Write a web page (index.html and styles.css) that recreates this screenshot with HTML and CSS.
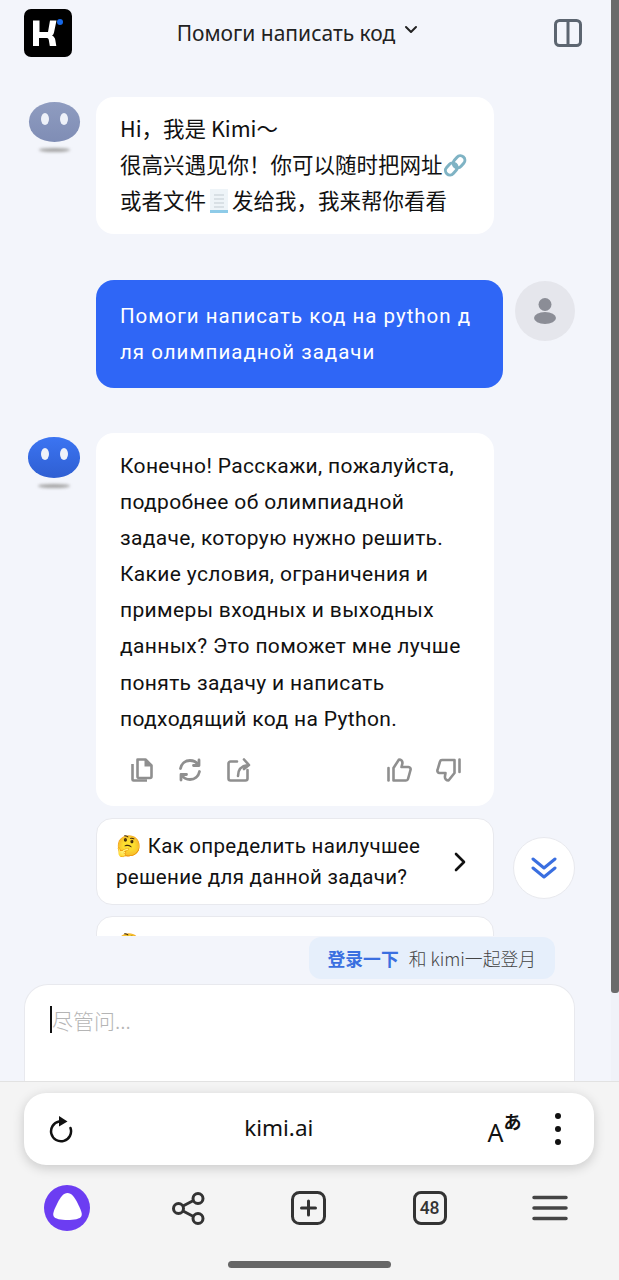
FILE: index.html
```html
<!DOCTYPE html>
<html lang="en">
<head>
  <meta charset="UTF-8" />
  <title>Kimi</title>
  <link rel="stylesheet" href="styles.css">
</head>
<body>
  <div class="page">
    <div class="web">
      <div class="top-bar">
        <svg class="logo" width="48" height="48" viewBox="0 0 48 48">
          <rect width="48" height="48" rx="7" fill="#000"/>
          <path d="M9 11.500h6.500V23H24l2-11.500h6.500l-2.500 12c-.4 1.500-1 2.500-2 3 2 1 3 2.500 3.300 4.500l1 6h-6.500l-1-6c-.3-1.500-1-2-2.500-2h-7.300v8H9z" fill="#fff"/>
          <circle cx="36" cy="13" r="3" fill="#1668e8"/>
        </svg>
        <div class="top-title">
          Помоги написать код
          <svg width="14" height="10" viewBox="0 0 14 10"><path d="M2 2l5 5 5-5" fill="none" stroke="#222" stroke-width="2" stroke-linecap="round" stroke-linejoin="round"/></svg>
        </div>
        <svg class="panel-icon" width="28" height="28" viewBox="0 0 28 28"><rect x="1.500" y="1.500" width="25" height="25" rx="4" fill="none" stroke="#5c6570" stroke-width="3"/><path d="M14 2v24" stroke="#5c6570" stroke-width="3"/></svg>
      </div>

      <div class="chat-messages">
        <div class="row row-first">
          <div class="bot-avatar pale"><i></i><i></i></div>
          <div class="message received first">
            Hi，我是 Kimi～<br>
            很高兴遇见你！你可以随时把网址<svg class="emoji" width="25" height="25" viewBox="0 0 25 25"><g fill="none" stroke="#7fb3c4" stroke-width="3"><rect x="12" y="2" width="9" height="13" rx="4.500" transform="rotate(42 16 8)"/><rect x="4" y="10" width="9" height="13" rx="4.500" transform="rotate(42 9 16)"/></g></svg><br>
            或者文件<svg class="emoji" width="26" height="26" viewBox="0 0 26 26"><rect x="4" y="1" width="18" height="24" fill="#eef4f8"/><path d="M4 22h18v3H4z" fill="#8ecbe8"/><path d="M8 7h10M8 11h10M8 15h10M8 19h10" stroke="#c3ccd2"/></svg>发给我，我来帮你看看
          </div>
        </div>

        <div class="row row-user">
          <div class="message sent">Помоги написать код на python д<br>ля олимпиадной задачи</div>
          <div class="user-avatar">
            <svg width="22" height="26" viewBox="0 0 22 26"><circle cx="11" cy="6.500" r="6.500" fill="#8b8d96"/><ellipse cx="11" cy="20" rx="11" ry="6" fill="#8b8d96"/></svg>
          </div>
        </div>

        <div class="row row-answer">
          <div class="bot-avatar"><i></i><i></i></div>
          <div class="message received answer">
            <div class="answer-text">Конечно! Расскажи, пожалуйста, подробнее об олимпиадной задаче, которую нужно решить. Какие условия, ограничения и примеры входных и выходных данных? Это поможет мне лучше понять задачу и написать подходящий код на Python.</div>
            <div class="actions">
              <div class="actions-group">
                <svg width="22" height="24" viewBox="0 0 22 24"><g fill="none" stroke="#8f8f8f" stroke-width="2.600" stroke-linejoin="round"><path d="M6.500 1.500h8l6 6v11a1.500 1.500 0 0 1-1.500 1.500H8a1.500 1.500 0 0 1-1.500-1.500z"/><path d="M1.500 6v15.500a1 1 0 0 0 1 1H16"/></g><path d="M13.500 1.500l7 7h-7z" fill="#8f8f8f"/></svg>
                <svg width="24" height="24" viewBox="0 0 24 24"><g fill="none" stroke="#8f8f8f" stroke-width="2.800" stroke-linecap="round" stroke-linejoin="round"><path d="M2.500 10.500C3.500 5.500 7.500 2.500 12 2.500c3.500 0 6.500 1.500 8.500 4.500"/><path d="M21.500 13.500c-1 5-5 8-9.500 8-3.500 0-6.500-1.500-8.500-4.500"/><path d="M21 2v5.500h-5.500M3 22v-5.500h5.500"/></g></svg>
                <svg width="24" height="24" viewBox="0 0 24 24"><g fill="none" stroke="#8f8f8f" stroke-width="2.600" stroke-linecap="round" stroke-linejoin="round"><path d="M10 3.500H3.500a2 2 0 0 0-2 2v15a2 2 0 0 0 2 2h15a2 2 0 0 0 2-2V12"/><path d="M11 18c0-7 3-10 10-11M17 1.500l5 5.500-5 4"/></g></svg>
              </div>
              <div class="actions-group thumbs">
                <svg width="25" height="24" viewBox="0 0 25 24"><g fill="none" stroke="#8f8f8f" stroke-width="2.600" stroke-linecap="round" stroke-linejoin="round"><path d="M1.500 10v12.500"/><path d="M6.500 10L12 1.500c2 0 3.500 1.500 3.500 3.500l-1 4h7c1.500 0 2.500 1.500 2 3l-2.500 9c-.3 1-1 1.500-2 1.500H6.500z"/></g></svg>
                <svg width="25" height="24" viewBox="0 0 25 24"><g fill="none" stroke="#8f8f8f" stroke-width="2.600" stroke-linecap="round" stroke-linejoin="round"><path d="M23.500 1.500V14"/><path d="M18.500 2H6c-1 0-1.700.5-2 1.500L1.500 12c-.5 1.500.5 3 2 3h6l-.5 3c-.5 3 1.500 4.500 3.500 4.500l6-7.500z"/></g></svg>
              </div>
            </div>
          </div>
        </div>

        <div class="suggest">
          <div class="suggest-text">🤔 Как определить наилучшее решение для данной задачи?</div>
          <svg width="14" height="20" viewBox="0 0 14 20"><path d="M3 2l8 8-8 8" fill="none" stroke="#111" stroke-width="2.600" stroke-linecap="round" stroke-linejoin="round"/></svg>
        </div>
        <div class="suggest suggest-cut">🤔</div>

        <div class="scroll-down">
          <svg width="26" height="24" viewBox="0 0 26 24"><path d="M2 3l11 9 11-9M2 12l11 9 11-9" fill="none" stroke="#3a6fe0" stroke-width="3" stroke-linecap="round" stroke-linejoin="round"/></svg>
        </div>
      </div>

      <div class="composer">
        <div class="login-row">
          <div class="login-tip"><b>登录一下</b><span>和 kimi一起登月</span></div>
        </div>
        <div class="input-box"><span class="caret"></span>尽管问...</div>
      </div>

      <div class="scroll-track"><div class="scroll-thumb"></div></div>
    </div>

    <div class="browser">
      <div class="url-bar">
        <svg width="28" height="27" viewBox="0 0 28 27"><path d="M11 5.500A10 10 0 1 0 22.500 12" fill="none" stroke="#111" stroke-width="2.500" stroke-linecap="round"/><path d="M11 0l8.500 5.500L11 10.500z" fill="#111"/></svg>
        <div class="url-text">kimi.ai</div>
        <div class="translate"><span class="tr-a">A</span><span class="tr-jp">あ</span></div>
        <div class="dots"><i></i><i></i><i></i></div>
      </div>
      <div class="tabs">
        <svg width="46" height="46" viewBox="0 0 46 46"><circle cx="23" cy="23" r="23" fill="#6c3df2"/><path d="M23.500 8c4 0 7 4 10 10 3 6 5 10 4 13-1 3-8 4-14 4S10.500 34 9.500 31s1-7 4-13 6-10 10-10z" fill="#fff"/></svg>
        <svg width="33" height="33" viewBox="0 0 33 33"><g fill="none" stroke="#333" stroke-width="3"><circle cx="26" cy="6.500" r="5"/><circle cx="6.500" cy="16.500" r="5"/><circle cx="26" cy="26.500" r="5"/><path d="M11 14l10.500-5.500M11 19l10.500 5.500"/></g></svg>
        <svg width="35" height="34" viewBox="0 0 35 34"><rect x="1.500" y="1.500" width="32" height="31" rx="7" fill="none" stroke="#333" stroke-width="3"/><path d="M17.500 10v14M10.500 17h14" stroke="#333" stroke-width="3" stroke-linecap="round"/></svg>
        <div class="tab-count">48</div>
        <svg width="36" height="26" viewBox="0 0 36 26"><path d="M2 2.500h32M2 13h32M2 23.500h32" stroke="#444" stroke-width="3.500" stroke-linecap="round"/></svg>
      </div>
      <div class="home-row"><div class="home-bar"></div></div>
    </div>
  </div>
</body>
</html>
```

FILE: styles.css
```css
* {
  box-sizing: border-box;
}

html, body {
  margin: 0;
  height: 1280px;
  overflow: hidden;
}

body {
  font-family: Roboto, "Noto Sans CJK SC", sans-serif;
  background: #f3f5fb;
  color: #111;
}

.page {
  display: flex;
  flex-direction: column;
  width: 619px;
  height: 1280px;
}

.web {
  position: relative;
  height: 1081px;
  padding-right: 8px;
  overflow: hidden;
}

.top-bar {
  display: flex;
  align-items: center;
  height: 68px;
  padding: 0 29px 2px 24px;
}

.logo {
  flex: none;
}

.top-title {
  flex: 1;
  display: flex;
  justify-content: center;
  align-items: center;
  gap: 9px;
  padding-right: 31px;
  font-family: "Noto Sans", sans-serif;
  font-size: 21px;
  color: #222;
}

.top-title svg {
  margin-top: -6px;
}

.chat-messages {
  padding: 0 36px 0 28px;
}

.row {
  display: flex;
  align-items: flex-start;
}

.row-first {
  margin-top: 29px;
}

.row-user {
  margin-top: 46px;
}

.row-answer {
  margin-top: 45px;
}

.bot-avatar {
  position: relative;
  flex: none;
  display: flex;
  justify-content: center;
  gap: 11px;
  width: 52px;
  height: 41px;
  margin: 4px 16px 0 0;
  padding-top: 11px;
  border-radius: 50% / 48%;
  background: linear-gradient(#3b74f2, #2f5fd2);
}

.bot-avatar.pale {
  background: linear-gradient(#8f9cc0, #7f8db5);
  width: 51px;
  height: 40px;
  margin: 5px 16px 0 1px;
}

.bot-avatar i {
  width: 8px;
  height: 12px;
  border-radius: 50%;
  background: #eef1f9;
}

.bot-avatar::after {
  content: "";
  position: absolute;
  left: 10px;
  right: 10px;
  bottom: -10px;
  height: 4px;
  border-radius: 50%;
  background: #a5a5a5;
  filter: blur(1.500px);
}

.message {
  border-radius: 18px;
  font-size: 20px;
  padding: 0 24px;
}

.received {
  width: 398px;
  background: #fff;
}

.first {
  height: 137px;
  padding-top: 13px;
  line-height: 36px;
  font-family: "Noto Sans CJK SC", sans-serif;
  font-size: 21.500px;
  font-weight: 400;
  color: #111;
}

.emoji {
  vertical-align: -5px;
}

.sent {
  width: 407px;
  height: 108px;
  margin: 0 12px 0 68px;
  padding-top: 18px;
  line-height: 36px;
  font-size: 20.500px;
  background: #2f66f6;
  color: #fff;
  letter-spacing: 1px;
}

.user-avatar {
  flex: none;
  display: flex;
  align-items: center;
  justify-content: center;
  width: 60px;
  height: 60px;
  margin-top: 1px;
  border-radius: 50%;
  background: #e5e6ec;
}

.answer {
  height: 373px;
  padding-top: 15px;
  font-size: 21px;
  line-height: 36.100px;
  letter-spacing: 0.350px;
}

.actions {
  display: flex;
  justify-content: space-between;
  margin-top: 21px;
  padding: 0 9px 0 11px;
}

.actions-group {
  display: flex;
  align-items: center;
  gap: 25px;
}

.thumbs {
  gap: 24px;
}

.suggest {
  display: flex;
  align-items: center;
  justify-content: space-between;
  width: 398px;
  height: 87px;
  margin: 12px 0 0 68px;
  padding: 0 26px 0 19px;
  background: #fff;
  border: 1px solid #e8e9ee;
  border-radius: 16px;
  font-size: 20.500px;
  line-height: 31px;
  letter-spacing: 0.300px;
  color: #111;
}

.suggest-text {
  width: 320px;
}

.suggest-cut {
  height: 60px;
  margin-top: 11px;
  align-items: flex-start;
  padding-top: 12px;
}

.scroll-down {
  position: absolute;
  right: 44px;
  top: 837px;
  display: flex;
  align-items: center;
  justify-content: center;
  width: 62px;
  height: 62px;
  border: 1px solid #e8e9ee;
  border-radius: 50%;
  background: #fff;
}

.composer {
  position: absolute;
  left: 0;
  right: 8px;
  top: 936px;
  height: 145px;
  padding-top: 1px;
  background: #f3f5fb;
}

.login-row {
  display: flex;
  justify-content: flex-end;
  padding-right: 56px;
}

.login-tip {
  display: flex;
  align-items: center;
  gap: 10px;
  height: 42px;
  padding: 0 19px;
  border-radius: 12px;
  background: #e6effb;
  font-family: "Noto Sans CJK SC", sans-serif;
  font-size: 17.800px;
  font-weight: 300;
  color: #444;
}

.login-tip b {
  color: #3a6fe0;
  font-weight: 700;
}

.input-box {
  display: flex;
  align-items: center;
  height: 110px;
  margin: 5px 36px 0 24px;
  padding: 0 0 40px 25px;
  background: #fff;
  border: 1px solid #e8e9ee;
  border-bottom: 0;
  border-radius: 24px 24px 0 0;
  font-family: "Noto Sans CJK SC", sans-serif;
  font-size: 21px;
  font-weight: 300;
  color: #b5b5b5;
}

.caret {
  width: 2px;
  height: 27px;
  background: #111;
}

.scroll-track {
  position: absolute;
  top: 0;
  right: 0;
  bottom: 0;
  width: 8px;
  background: #f0f2f8;
}

.scroll-thumb {
  height: 993px;
  border-radius: 0 0 3px 3px;
  background: #6b6b6b;
}

.browser {
  flex: 1;
  display: flex;
  flex-direction: column;
  align-items: center;
  background: #f4f4f4;
  border-top: 1px solid #e2e2e2;
}

.url-bar {
  display: flex;
  align-items: center;
  align-self: flex-start;
  width: 570px;
  height: 72px;
  margin: 11px 0 0 24px;
  padding: 0 33px 0 24px;
  border-radius: 22px;
  background: #fff;
  box-shadow: 0 3px 12px rgba(0, 0, 0, 0.18);
}

.url-text {
  flex: 1;
  text-align: center;
  padding: 0 6px 4px 0;
  font-family: "Noto Sans", sans-serif;
  font-size: 22.500px;
  color: #111;
}

.translate {
  position: relative;
  width: 34px;
  height: 34px;
  margin-right: 33px;
  color: #111;
}

.tr-a {
  position: absolute;
  left: 0;
  bottom: -1px;
  font: 25px/30px "Noto Sans", sans-serif;
}

.tr-jp {
  position: absolute;
  right: 0;
  top: -2px;
  font: bold 18px/22px "Noto Sans CJK JP", sans-serif;
}

.dots {
  display: flex;
  flex-direction: column;
  gap: 6.500px;
}

.dots i {
  width: 6.500px;
  height: 6.500px;
  border-radius: 50%;
  background: #111;
}

.tabs {
  display: grid;
  grid-template-columns: repeat(5, 120.750px);
  align-items: center;
  justify-items: center;
  width: 100%;
  height: 54px;
  margin-top: 16px;
  padding-left: 7px;
}

.tab-count {
  display: flex;
  align-items: center;
  justify-content: center;
  width: 34px;
  height: 34px;
  border: 3px solid #333;
  border-radius: 8px;
  font-size: 17.500px;
  font-weight: 500;
  color: #333;
}

.home-row {
  margin-top: 26px;
}

.home-bar {
  width: 163px;
  height: 7px;
  border-radius: 4px;
  background: #666;
}
```
